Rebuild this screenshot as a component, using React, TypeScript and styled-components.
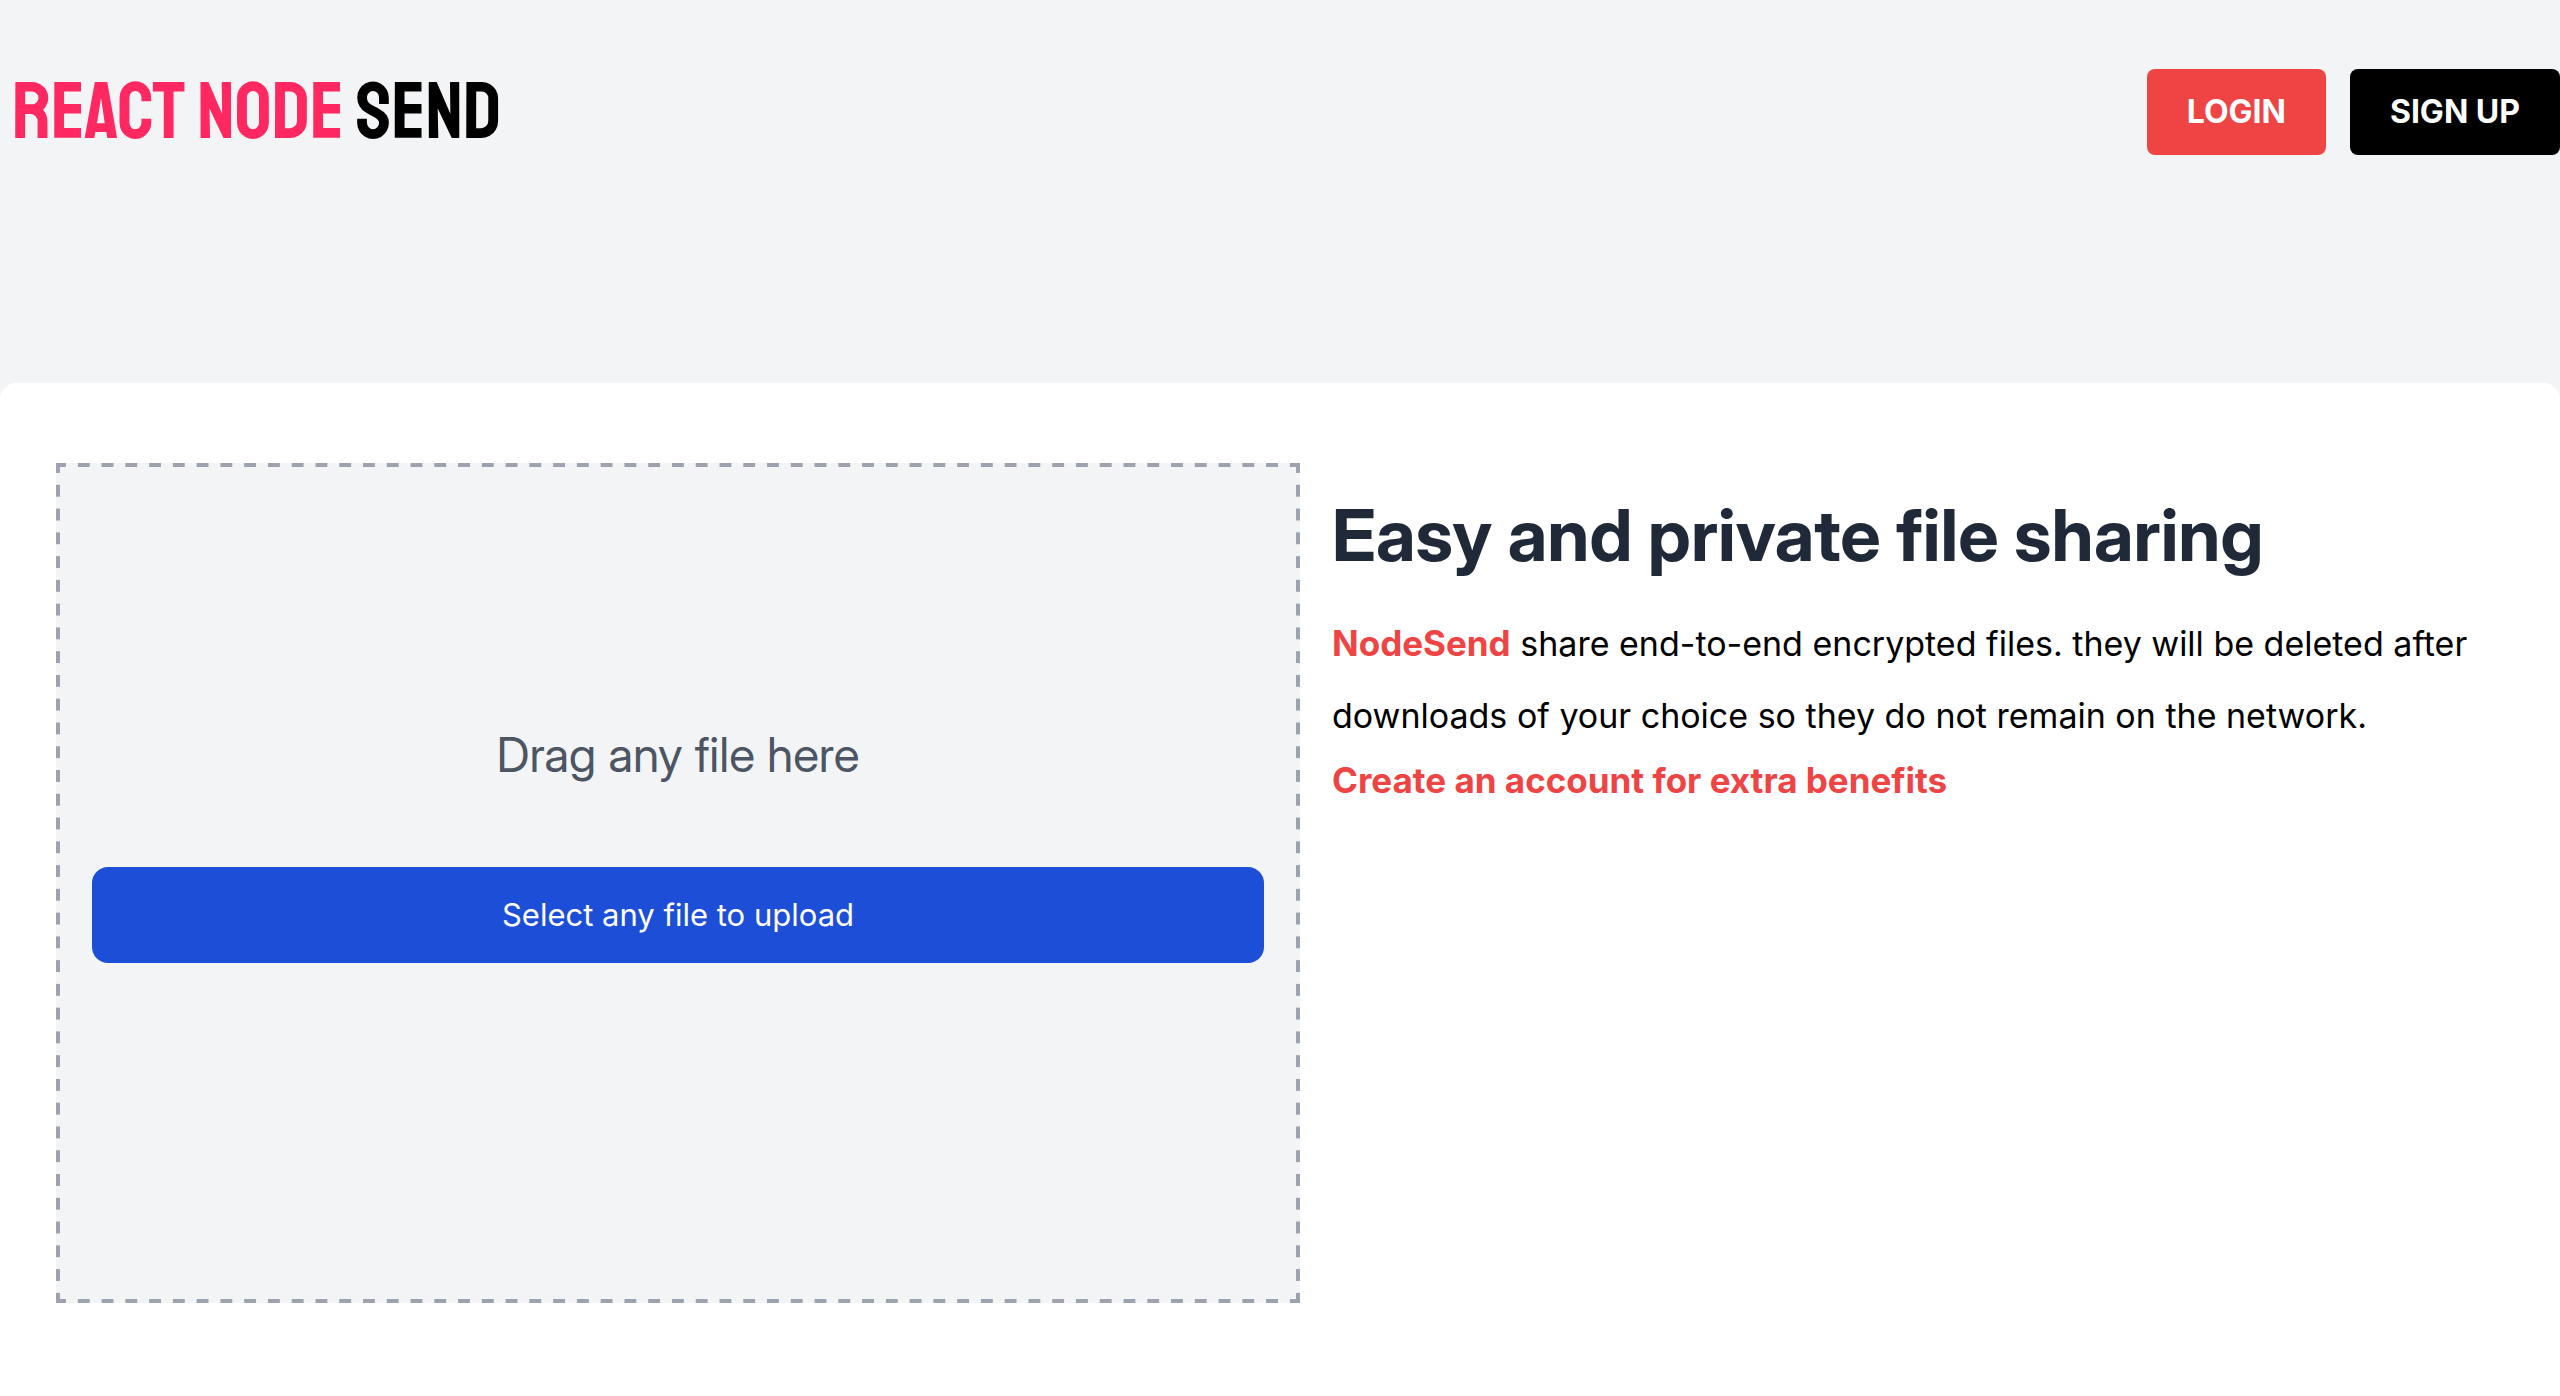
import React from "react";
import styled, { createGlobalStyle } from "styled-components";

const GlobalStyle = createGlobalStyle`
  *, *::before, *::after { box-sizing: border-box; }
  body {
    margin: 0;
    background: #f3f4f6;
    color: #000;
    font-family: Inter, "Liberation Sans", sans-serif;
  }
  h1, p { margin: 0; }
`;

const displayFont = `"Inter Display", "Inter Tight", Inter, sans-serif`;

const Page = styled.div`
  display: flex;
  flex-direction: column;
  min-height: 100vh;
`;

const Header = styled.header`
  display: flex;
  align-items: center;
  justify-content: space-between;
  padding: 64px 0;
  margin-bottom: 159px;
`;

const Logo = styled.a`
  padding-left: 12px;
  color: #000;
  font-family: Staatliches, "Bebas Neue", "Roboto Condensed", sans-serif;
  font-size: 81px;
  font-weight: 400;
  line-height: 96px;
  text-decoration: none;
  text-transform: uppercase;
`;

const LogoAccent = styled.span`
  color: #ff2860;
`;

const Nav = styled.nav`
  display: flex;
  gap: 24px;
`;

const NavLink = styled.a<{ $color: string }>`
  padding: 24px 40px;
  border-radius: 8px;
  background: ${(p) => p.$color};
  color: #fff;
  font-size: 32px;
  font-weight: 700;
  line-height: 38px;
  text-decoration: none;
  text-transform: uppercase;
`;

const Card = styled.main`
  flex: 1;
  display: grid;
  grid-template-columns: 1244fr 1172fr;
  align-items: start;
  gap: 32px;
  padding: 80px 56px;
  border-radius: 16px 16px 0 0;
  background: #fff;
`;

const dash = (angle: string) =>
  `linear-gradient(${angle}, #9ca3af 25%, transparent 25% 75%, #9ca3af 75%)`;

/* The dashes are background tiles, so they can be longer than those of a
   dashed border; "round" fits a whole number of them to each side. */
const DropZone = styled.section`
  display: flex;
  flex-direction: column;
  justify-content: center;
  min-height: 840px;
  padding: 32px;
  border: 4px solid transparent;
  background-color: #f3f4f6;
  background-image: ${dash("90deg")}, ${dash("90deg")}, ${dash("0deg")}, ${dash("0deg")};
  background-origin: padding-box;
  background-clip: border-box;
  background-size: 24px 4px, 24px 4px, 4px 24px, 4px 24px;
  background-repeat: round no-repeat, round no-repeat, no-repeat round, no-repeat round;
  background-position: 0 -4px, 0 calc(100% + 4px), -4px 0, calc(100% + 4px) 0;
`;

const DropHint = styled.p`
  color: #4b5563;
  font-family: ${displayFont};
  font-size: 48px;
  line-height: 64px;
  text-align: center;
`;

const UploadButton = styled.button`
  width: 100%;
  margin: 80px 0;
  padding: 24px;
  border: 0;
  border-radius: 16px;
  background: #1d4ed8;
  color: #fff;
  font: inherit;
  font-size: 31px;
  line-height: 48px;
  cursor: pointer;
`;

const Intro = styled.section`
  padding-top: 32px;
`;

const Title = styled.h1`
  color: #1f2937;
  font-family: ${displayFont};
  font-size: 72px;
  font-weight: 700;
  line-height: 80px;
`;

const Lead = styled.p`
  margin-top: 32px;
  font-size: 34px;
  line-height: 72px;
`;

const Brand = styled.span`
  color: #ef4444;
  font-size: 35px;
  font-weight: 700;
`;

const AccountLink = styled.a`
  display: block;
  color: #ef4444;
  font-size: 35px;
  font-weight: 700;
  line-height: 56px;
  text-decoration: none;
`;

export default function App() {
  return (
    <>
      <GlobalStyle />
      <Page>
        <Header>
          <Logo href="#">
            <LogoAccent>React Node</LogoAccent> Send
          </Logo>
          <Nav>
            <NavLink href="#login" $color="#ef4444">Login</NavLink>
            <NavLink href="#signup" $color="#000">Sign up</NavLink>
          </Nav>
        </Header>
        <Card>
          <DropZone>
            <DropHint>Drag any file here</DropHint>
            <UploadButton type="button">Select any file to upload</UploadButton>
          </DropZone>
          <Intro>
            <Title>Easy and private file sharing</Title>
            <Lead>
              <Brand>NodeSend</Brand> share end-to-end encrypted files. they will be
              deleted after downloads of your choice so they do not remain on the
              network.
            </Lead>
            <AccountLink href="#signup">Create an account for extra benefits</AccountLink>
          </Intro>
        </Card>
      </Page>
    </>
  );
}
